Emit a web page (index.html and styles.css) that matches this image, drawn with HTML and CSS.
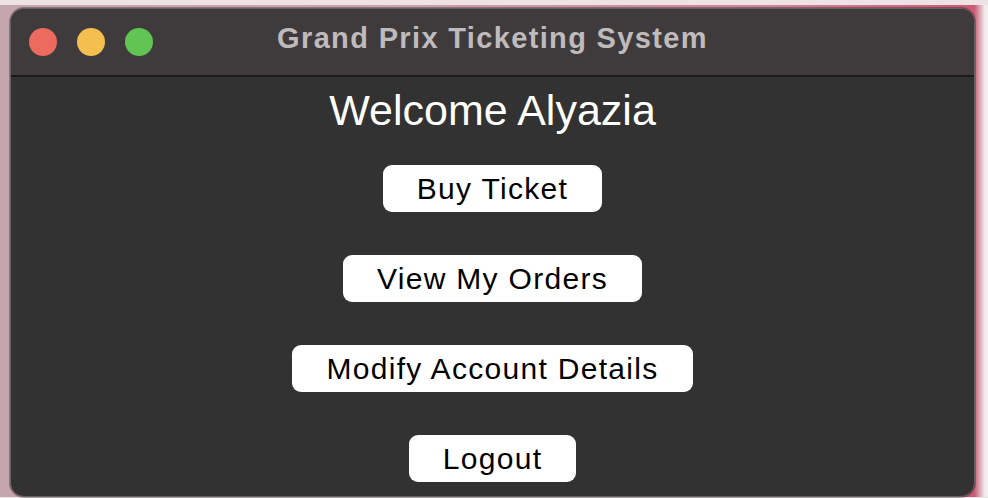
FILE: index.html
```html
<!DOCTYPE html>
<html lang="en">
<head>
<meta charset="utf-8">
<title>Grand Prix Ticketing System</title>
<link rel="stylesheet" href="styles.css">
</head>
<body>
<div class="window">
  <header class="titlebar">
    <div class="lights">
      <span class="light red"></span>
      <span class="light yellow"></span>
      <span class="light green"></span>
    </div>
    <div class="title">Grand Prix Ticketing System</div>
    <div class="spacer"></div>
  </header>
  <main class="content">
    <h1 class="welcome">Welcome Alyazia</h1>
    <div class="actions">
      <button class="btn">Buy Ticket</button>
      <button class="btn">View My Orders</button>
      <button class="btn">Modify Account Details</button>
      <button class="btn">Logout</button>
    </div>
  </main>
</div>
</body>
</html>
```
FILE: styles.css
```css
html, body {
  margin: 0;
  height: 100%;
}
body {
  font-family: "Liberation Sans", Arial, sans-serif;
  background:
    linear-gradient(to bottom, #efe2e5 0, #efe2e5 5px, transparent 5px, transparent 497px, #e6e6e6 497px),
    linear-gradient(to right, #c6a6ae 0, #c9a2ab 40%, #cc8294 80%, #c85b76 98.6%, #f2eef0 99.7%);
  padding: 8px 13px 1px 10px;
  box-sizing: border-box;
  overflow: hidden;
}
.window {
  height: 489px;
  box-sizing: border-box;
  border: 1px solid #646264;
  border-radius: 14px;
  background: #323232;
  overflow: hidden;
  display: flex;
  flex-direction: column;
  box-shadow: 0 0 0 1px rgba(40, 20, 25, 0.35);
}
.titlebar {
  height: 66px;
  flex: none;
  background: #3f3b3c;
  border-bottom: 2px solid #1c1a1b;
  display: grid;
  grid-template-columns: 1fr auto 1fr;
  align-items: center;
}
.lights {
  display: flex;
  gap: 20px;
  padding-left: 18px;
}
.light {
  width: 28px;
  height: 28px;
  border-radius: 50%;
  display: block;
}
.red { background: #ec6a5e; }
.yellow { background: #f4bf4f; }
.green { background: #61c554; }
.title {
  align-self: start;
  padding-top: 15px;
  font-size: 29px;
  line-height: 29px;
  font-weight: bold;
  color: #bfbbbc;
  letter-spacing: 1.35px;
}
.content {
  flex: 1;
  display: flex;
  flex-direction: column;
  align-items: center;
  padding-top: 8px;
}
.welcome {
  margin: 0;
  font-weight: normal;
  font-size: 43px;
  line-height: 50px;
  color: #ffffff;
}
.actions {
  margin-top: 30px;
  display: flex;
  flex-direction: column;
  align-items: center;
  gap: 43px;
}
.btn {
  height: 47px;
  padding: 0 34px;
  border: none;
  border-radius: 9px;
  background: #ffffff;
  color: #000000;
  font-family: "Liberation Sans", Arial, sans-serif;
  font-size: 30px;
  letter-spacing: 1.3px;
  line-height: 47px;
  cursor: pointer;
}
```
